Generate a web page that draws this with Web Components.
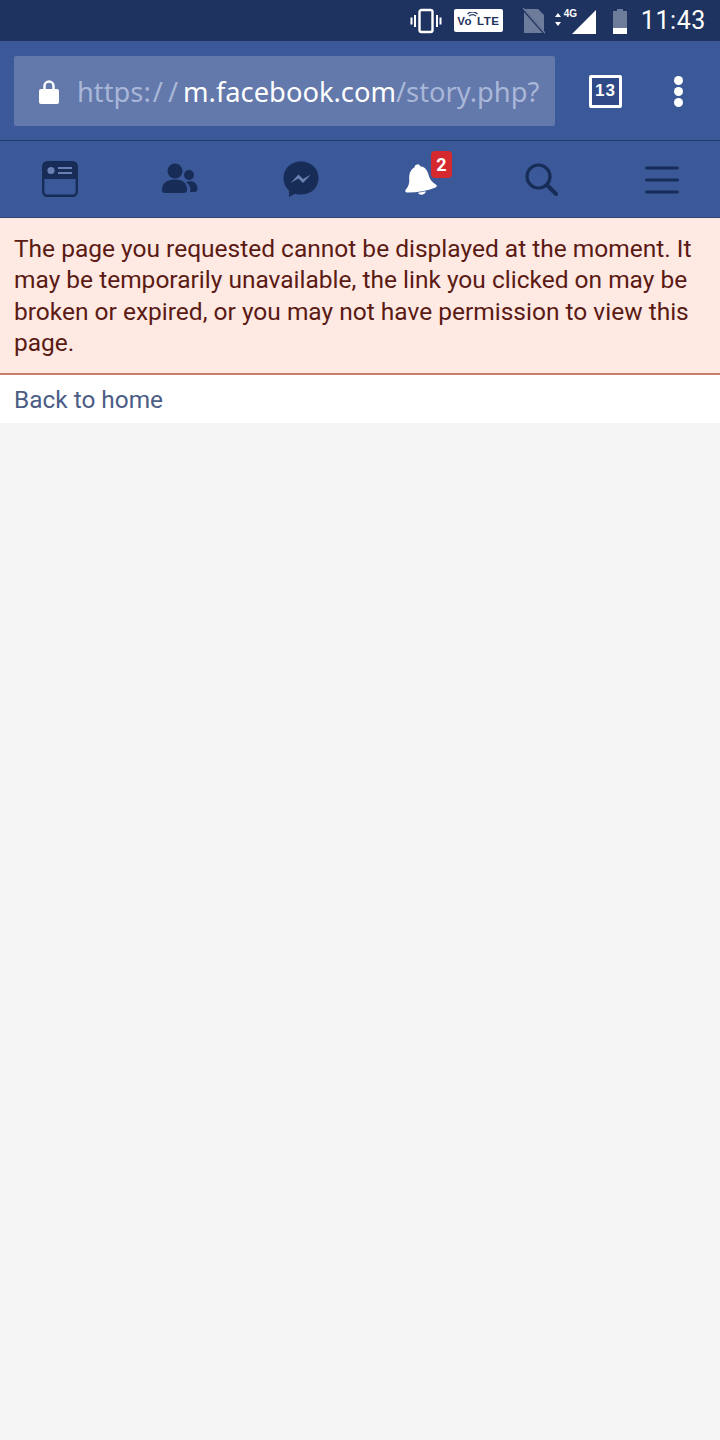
<!DOCTYPE html>
<html>
<head>
<meta charset="utf-8">
<style>
html, body { margin: 0; padding: 0; background: #f5f5f5; }
body { width: 720px; height: 1440px; overflow: hidden; display: flex; flex-direction: column; font-family: Roboto, sans-serif; }
</style>
</head>
<body>
<status-bar time="11:43"></status-bar>
<url-bar tabs="13">
  <span slot="scheme">https:</span><span slot="sep">//</span><b slot="host">m.facebook.com</b><span slot="path">/story.php?</span>
</url-bar>
<fb-nav notifications="2"></fb-nav>
<error-box>The page you requested cannot be displayed at the moment. It may be temporarily unavailable, the link you clicked on may be broken or expired, or you may not have permission to view this page.</error-box>
<back-link>Back to home</back-link>

<script>
class StatusBar extends HTMLElement {
    constructor() {
        super();
        this.attachShadow({ mode: 'open' });
    }

    connectedCallback() {
        this.shadowRoot.innerHTML = `
            <style>
                :host { display: flex; height: 41px; flex: none; background: #1f3360; align-items: center; justify-content: flex-end; color: #fff; padding-right: 14px; box-sizing: border-box; }
                svg { display: block; flex: none; }
                .volte { position: relative; display: flex; align-items: center; justify-content: center; gap: 5px; width: 49px; height: 23px; margin-left: 12px; background: #fff; color: #1f3360; border-radius: 2px; font: 700 11.5px "Liberation Sans", sans-serif; letter-spacing: .5px; }
                .volte svg { position: absolute; left: 13px; top: 3px; }
                .net { position: relative; width: 44px; height: 28px; margin-left: 8px; }
                .net span { position: absolute; left: 11px; top: 1px; font: 700 10px "Liberation Sans", sans-serif; }
                .net svg { position: absolute; left: 0; top: 0; }
                .time { font: 400 25px Roboto, sans-serif; margin-left: 13px; letter-spacing: .6px; }
            </style>
            <svg width="32" height="26" viewBox="0 0 32 26" fill="none" stroke="#fff">
                <rect x="9.5" y="2" width="13" height="22" rx="2" stroke-width="2.4"/>
                <path d="M5 7v12M1.5 9.5v7M27 7v12M30.5 9.5v7" stroke-width="2"/>
            </svg>
            <div class="volte"><span>Vo</span><span>LTE</span>
                <svg width="11" height="9" viewBox="0 0 11 9" fill="none" stroke="#1f3360" stroke-width="1.2">
                    <path d="M2 4a5 5 0 0 1 7 0M0.5 2a7 7 0 0 1 10 0"/>
                </svg>
            </div>
            <svg style="margin-left:20px" width="22" height="26" viewBox="0 0 22 26">
                <path d="M1 1h14l6 6v18H1z" fill="#6e7c9c"/>
                <path d="M0 1l21 24" stroke="#1f3360" stroke-width="2.5"/>
                <path d="M0 0l22 25" stroke="#6e7c9c" stroke-width="1.4"/>
            </svg>
            <div class="net">
                <svg width="44" height="28" viewBox="0 0 44 28">
                    <path d="M2 10l3 -4l3 4zM2 15l3 4l3 -4z" fill="#fff"/>
                    <path d="M19 27L43 3v24z" fill="#fff"/>
                </svg>
                <span>4G</span>
            </div>
            <svg style="margin-left:15px" width="16" height="26" viewBox="0 0 16 26">
                <path d="M5 1h6v2h4v23H1V3h4z" fill="#6e7c9c"/>
                <rect x="1" y="20" width="14" height="6" fill="#fff"/>
            </svg>
            <div class="time">${this.getAttribute('time')}</div>
        `;
    }
}

class UrlBar extends HTMLElement {
    constructor() {
        super();
        this.attachShadow({ mode: 'open' });
    }

    connectedCallback() {
        this.shadowRoot.innerHTML = `
            <style>
                :host { display: flex; height: 99px; flex: none; box-sizing: border-box; padding: 15px 0 14px 14px; background: #3b5998; align-items: stretch; }
                .field { width: 541px; flex: none; box-sizing: border-box; display: flex; align-items: center; padding-left: 25px; background: #6378ab; border-radius: 2px; }
                .text { margin-left: 18px; font: 400 27.3px "Noto Sans", sans-serif; color: #a9b7d8; white-space: nowrap; }
                ::slotted(span[slot="sep"]) { letter-spacing: 5px; margin-left: 2px; }
                ::slotted(b) { font-weight: 400; color: #fff; }
                .tabs { width: 33px; height: 33px; box-sizing: border-box; border: 3px solid #fff; border-radius: 2px; margin: auto 0 auto 34px; display: flex; align-items: center; justify-content: center; color: #fff; font: 700 17px "Liberation Sans", sans-serif; letter-spacing: 1px; background: #2f4a86; }
                .dots { margin: auto 0 auto 52px; display: flex; flex-direction: column; gap: 2px; }
                .dots i { width: 9px; height: 9px; border-radius: 50%; background: #fff; }
            </style>
            <div class="field">
                <svg width="20" height="25" viewBox="0 0 20 25">
                    <path d="M5.500 11V7a4.500 4.500 0 0 1 9 0v4" fill="none" stroke="#fff" stroke-width="2.4"/>
                    <rect y="10" width="20" height="15" rx="2" fill="#fff"/>
                </svg>
                <div class="text"><slot name="scheme"></slot><slot name="sep"></slot><slot name="host"></slot><slot name="path"></slot></div>
            </div>
            <div class="tabs">${this.getAttribute('tabs')}</div>
            <div class="dots"><i></i><i></i><i></i></div>
        `;
    }
}

class FbNav extends HTMLElement {
    constructor() {
        super();
        this.attachShadow({ mode: 'open' });
    }

    connectedCallback() {
        const dark = '#172c56';
        this.shadowRoot.innerHTML = `
            <style>
                :host { display: grid; grid-template-columns: repeat(6, 120.33px); height: 78px; flex: none; box-sizing: border-box; background: #3b5998; border-top: 1px solid #233c70; border-bottom: 1px solid #2d4579; }
                .cell { position: relative; display: flex; align-items: center; justify-content: center; }
                svg { display: block; }
                .badge { position: absolute; left: 70px; top: 10px; width: 21px; height: 27px; border-radius: 4px; background: #d6282f; color: #fff; font: 700 18px Roboto, sans-serif; display: flex; align-items: center; justify-content: center; }
            </style>
            <div class="cell">
                <svg width="36" height="36" viewBox="0 0 36 36">
                    <rect x="1.2" y="1.2" width="33.6" height="33.6" rx="4" fill="none" stroke="${dark}" stroke-width="2.4"/>
                    <path d="M1 5a4 4 0 0 1 4-4h26a4 4 0 0 1 4 4v13H1z" fill="${dark}"/>
                    <circle cx="9" cy="9.5" r="3.6" fill="#6a80b2"/>
                    <path d="M16 7h14M16 12h14" stroke="#6a80b2" stroke-width="2"/>
                </svg>
            </div>
            <div class="cell">
                <svg width="36" height="32" viewBox="0 0 36 32" fill="${dark}">
                    <circle cx="13" cy="8" r="7.5"/>
                    <path d="M0 27c0-7 5-10.500 13-10.500S25 20 25 27c0 2-1 3-3 3H3c-2 0-3-1-3-3z"/>
                    <circle cx="27" cy="12" r="5"/>
                    <path d="M24 19c6-2 11 0 11.500 6 .2 2-1 4-3 4H28c1-4 0-7-4-10z"/>
                </svg>
            </div>
            <div class="cell">
                <svg width="36" height="36" viewBox="0 0 36 36">
                    <path d="M18 .5C8 .5 .5 7.500 .5 17c0 5 2 9.500 5.500 12.500V36l6-3.300c2 .6 4 .9 6 .9 10 0 17.500-7 17.500-16.600S28 .5 18 .5z" fill="${dark}"/>
                    <path d="M7.500 22l8-8.500 4.500 4.500 8-4.500-8 8.500-4.500-4.500z" fill="#6a80b2"/>
                </svg>
            </div>
            <div class="cell">
                <svg style="margin:3px 0 0 0" width="34" height="36" viewBox="0 0 34 36" fill="#fff">
                    <g transform="rotate(-10 17 18)">
                        <circle cx="16" cy="4" r="3"/>
                        <path d="M16 3c6 0 9 4 9.500 10 .4 5 2 8 5.500 11 1.200 1 .8 2.500-.8 3-9 1.800-20 1.800-29 0-1.600-.5-2-2-.8-3 3.500-3 5.100-6 5.500-11C7 7 10 3 16 3z"/>
                        <path d="M12 29c1 3.500 7 3.500 8 0z"/>
                    </g>
                </svg>
                <div class="badge">${this.getAttribute('notifications')}</div>
            </div>
            <div class="cell">
                <svg width="33" height="33" viewBox="0 0 33 33" fill="none" stroke="${dark}">
                    <circle cx="13.500" cy="13.500" r="11.500" stroke-width="3.200"/>
                    <path d="M22 22L31 31" stroke-width="4" stroke-linecap="round"/>
                </svg>
            </div>
            <div class="cell">
                <svg style="margin-top:2px" width="34" height="28" viewBox="0 0 34 28" stroke="${dark}" stroke-width="2.800" stroke-linecap="round">
                    <path d="M1.500 2h31M1.500 14h31M1.500 26h31"/>
                </svg>
            </div>
        `;
    }
}

class ErrorBox extends HTMLElement {
    constructor() {
        super();
        this.attachShadow({ mode: 'open' });
    }

    connectedCallback() {
        this.shadowRoot.innerHTML = `
            <style>
                :host { display: block; flex: none; box-sizing: border-box; height: 157px; padding: 15px 14px 0; background: #fee9e3; border-bottom: 2px solid #c77d6d; color: #5b1a14; font: 400 24.5px/31.3px Roboto, sans-serif; }
            </style>
            <slot></slot>
        `;
    }
}

class BackLink extends HTMLElement {
    constructor() {
        super();
        this.attachShadow({ mode: 'open' });
    }

    connectedCallback() {
        this.shadowRoot.innerHTML = `
            <style>
                :host { display: flex; align-items: center; flex: none; height: 48px; padding: 0 14px; background: #fff; color: #4b5d85; font: 400 24.4px Roboto, sans-serif; }
            </style>
            <slot></slot>
        `;
    }
}

customElements.define('status-bar', StatusBar);
customElements.define('url-bar', UrlBar);
customElements.define('fb-nav', FbNav);
customElements.define('error-box', ErrorBox);
customElements.define('back-link', BackLink);
</script>
</body>
</html>
